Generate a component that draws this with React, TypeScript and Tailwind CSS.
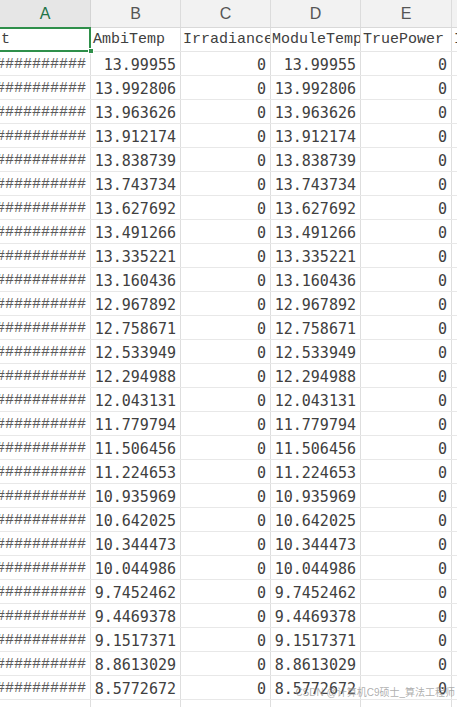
import React from 'react';

const values = [
  '13.99955', '13.992806', '13.963626', '13.912174', '13.838739', '13.743734',
  '13.627692', '13.491266', '13.335221', '13.160436', '12.967892', '12.758671',
  '12.533949', '12.294988', '12.043131', '11.779794', '11.506456', '11.224653',
  '10.935969', '10.642025', '10.344473', '10.044986', '9.7452462', '9.4469378',
  '9.1517371', '8.8613029', '8.5772672',
];

const mono = { fontFamily: '"Liberation Mono", monospace' };
const num = { fontFamily: '"DejaVu Sans Mono", monospace' };

const App: React.FC = () => {
  return (
    <div className="w-[457px] h-[707px] overflow-hidden bg-white text-[#404040] relative">
      {/* Column headers */}
      <div className="flex h-[28px] bg-[#f2f2f2] border-b border-[#d9d9d9] text-[16px] text-[#555]" style={{ fontFamily: '"Liberation Sans", Arial, sans-serif' }}>
        <div className="w-[91px] shrink-0 flex items-center justify-center bg-[#e6e6e6] text-[#217346] border-r border-[#d4d4d4]">A</div>
        <div className="w-[90px] shrink-0 flex items-center justify-center border-r border-[#dcdcdc]">B</div>
        <div className="w-[90px] shrink-0 flex items-center justify-center border-r border-[#dcdcdc]">C</div>
        <div className="w-[90px] shrink-0 flex items-center justify-center border-r border-[#dcdcdc]">D</div>
        <div className="w-[91px] shrink-0 flex items-center justify-center border-r border-[#dcdcdc]">E</div>
        <div className="flex-1" />
      </div>

      {/* Title row */}
      <div className="flex h-[24px] border-b border-[#e6e6e6] text-[15px]" style={mono}>
        <div className="w-[91px] shrink-0 relative flex items-center pt-[2px] pl-[1px]">
          <span>t</span>
          <div className="absolute -left-[2px] -top-[1px] w-[93px] h-[25px] border-2 border-[#2f8f4a]" />
          <div className="absolute right-[-3px] bottom-[-3px] w-[6px] h-[6px] bg-[#2f8f4a] border border-white" />
        </div>
        <div className="w-[90px] shrink-0 flex items-center pt-[2px] pl-[2px] border-r border-[#dedede] overflow-hidden whitespace-nowrap">AmbiTemp</div>
        <div className="w-[90px] shrink-0 flex items-center pt-[2px] pl-[2px] border-r border-[#dedede] overflow-hidden whitespace-nowrap">Irradiance</div>
        <div className="w-[90px] shrink-0 flex items-center pt-[2px] pl-[1px] border-r border-[#dedede] overflow-hidden whitespace-nowrap">ModuleTemp</div>
        <div className="w-[91px] shrink-0 flex items-center pt-[2px] pl-[2px] border-r border-[#dedede] overflow-hidden whitespace-nowrap">TruePower</div>
        <div className="flex-1 flex items-center pt-[2px] pl-[2px] overflow-hidden whitespace-nowrap">I</div>
      </div>

      {/* Data rows */}
      {values.map((v) => (
        <div key={v} className="flex h-[24px] border-b border-[#e8e8e8] text-[15px]" style={num}>
          <div className="w-[91px] shrink-0 flex items-center justify-end pt-[3px] pr-[4px] border-r border-[#dedede] overflow-hidden whitespace-nowrap text-[#5a5a5a]" style={mono}>
            ##########
          </div>
          <div className="w-[90px] shrink-0 flex items-center justify-end pt-[3px] pr-[4px] border-r border-[#dedede] whitespace-nowrap">{v}</div>
          <div className="w-[90px] shrink-0 flex items-center justify-end pt-[3px] pr-[4px] border-r border-[#dedede]">0</div>
          <div className="w-[90px] shrink-0 flex items-center justify-end pt-[3px] pr-[4px] border-r border-[#dedede] whitespace-nowrap">{v}</div>
          <div className="w-[91px] shrink-0 flex items-center justify-end pt-[3px] pr-[4px] border-r border-[#dedede]">0</div>
          <div className="flex-1" />
        </div>
      ))}

      {/* empty partial row */}
      <div className="flex h-[24px]">
        <div className="w-[91px] shrink-0 border-r border-[#dedede]" />
        <div className="w-[90px] shrink-0 border-r border-[#dedede]" />
        <div className="w-[90px] shrink-0 border-r border-[#dedede]" />
        <div className="w-[90px] shrink-0 border-r border-[#dedede]" />
        <div className="w-[91px] shrink-0 border-r border-[#dedede]" />
      </div>

      {/* Watermark */}
      <div
        className="absolute right-[2px] bottom-[7px] text-[10px] text-[#8a8a8a]/70 whitespace-nowrap"
        style={{ fontFamily: '"Liberation Sans", "Noto Sans CJK SC", sans-serif' }}
      >
        CSDN @计算机C9硕士_算法工程师
      </div>
    </div>
  );
};

export default App;
